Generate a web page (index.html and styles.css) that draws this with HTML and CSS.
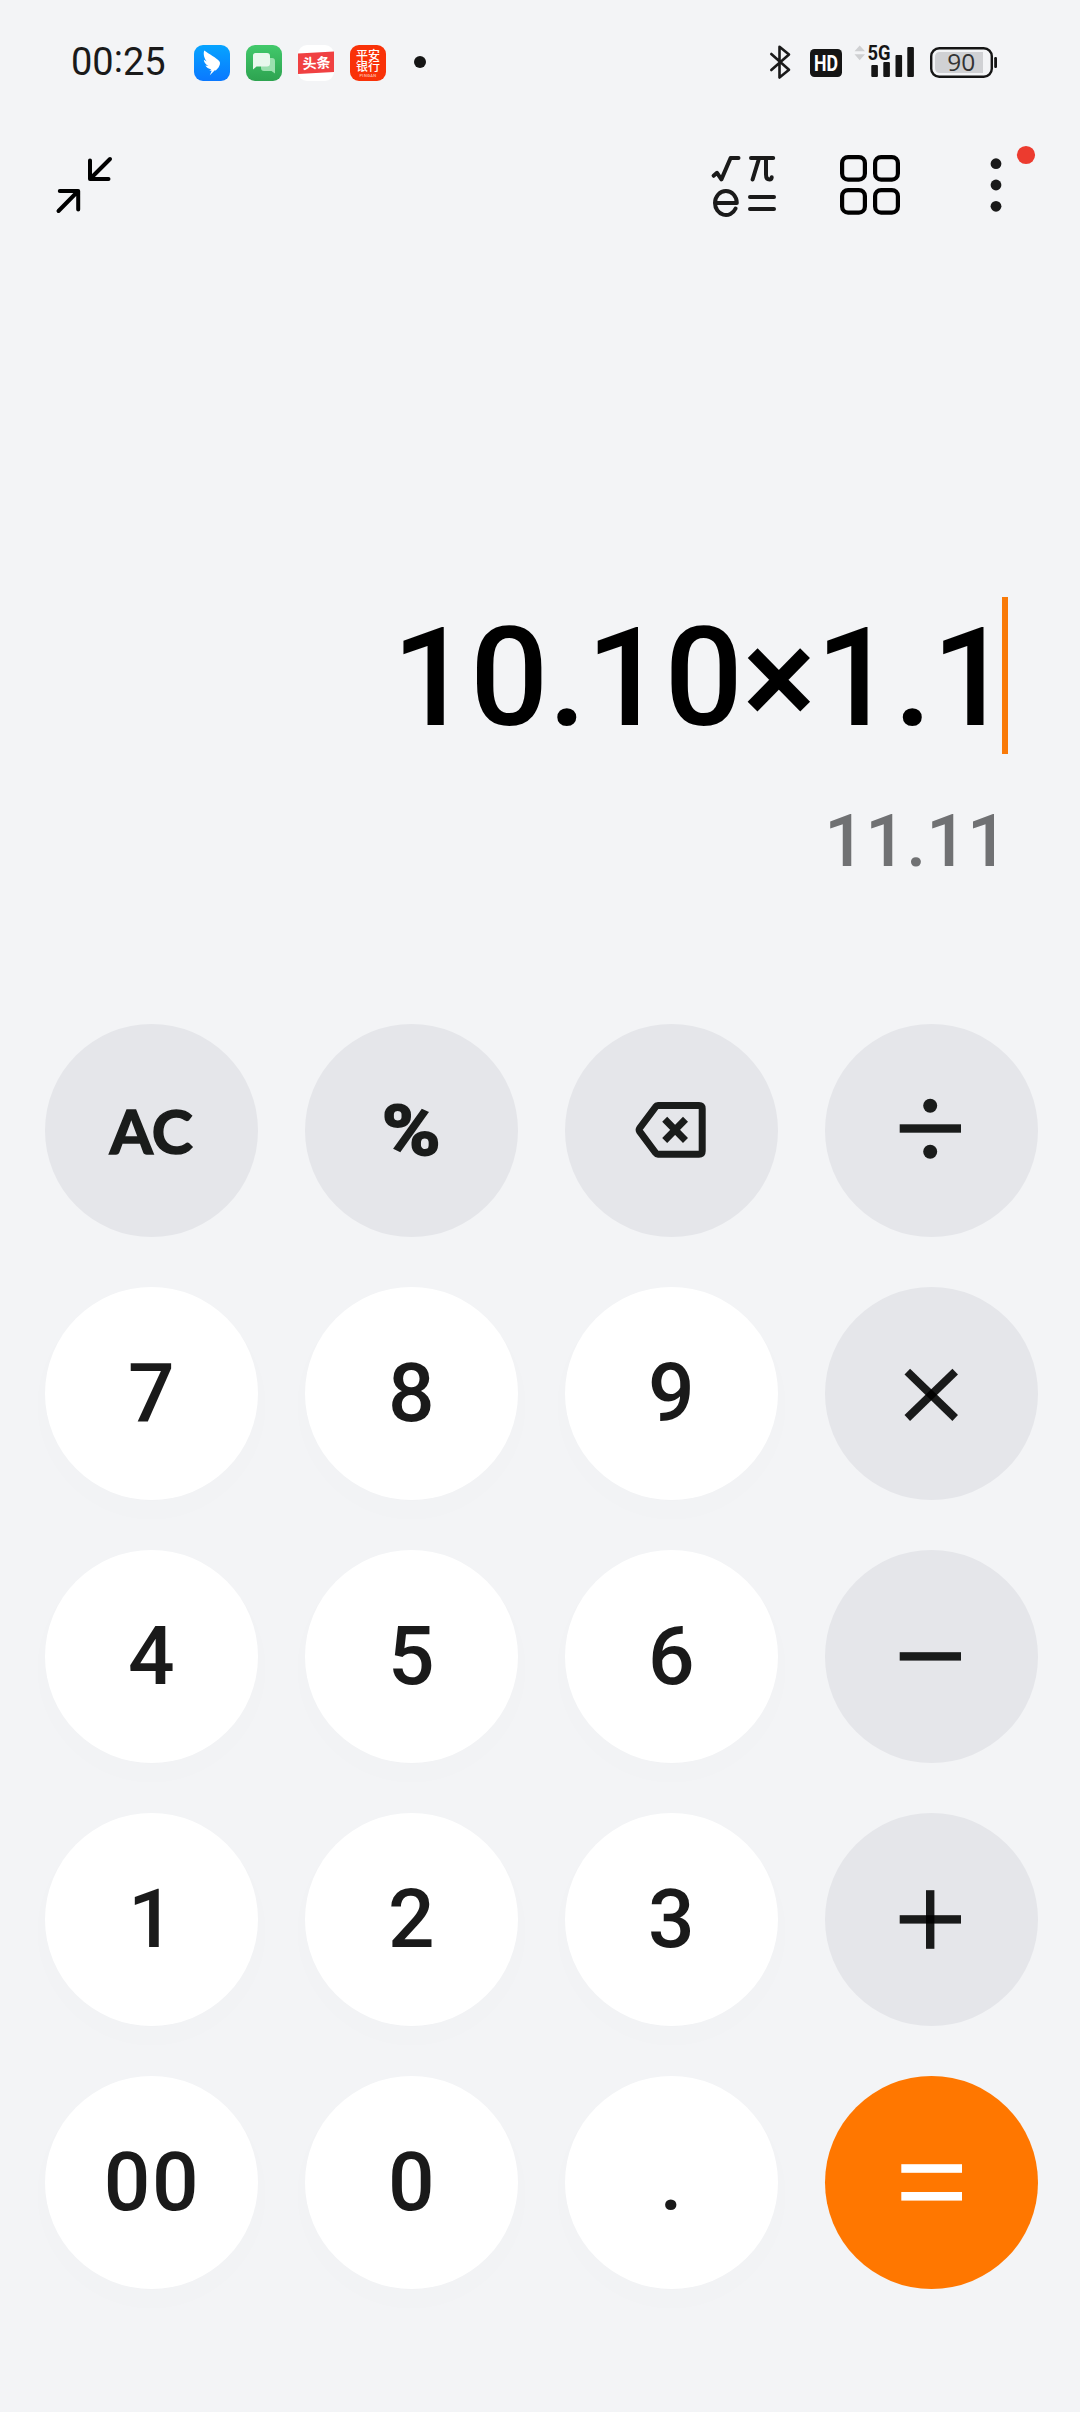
FILE: index.html
```html
<!DOCTYPE html>
<html lang="zh-CN">
<head>
<meta charset="utf-8">
<title>计算器</title>
<link rel="stylesheet" href="styles.css">
</head>
<body>
<div class="screen">
  <div class="status">
    <div class="clock">00<span class="colon">:</span>25</div>
    <div class="apps">
      <svg class="app" viewBox="0 0 36 36">
        <defs><linearGradient id="blue" x1="0" y1="0" x2="0" y2="1"><stop offset="0" stop-color="#06a4ff"/><stop offset="1" stop-color="#0a78ff"/></linearGradient></defs>
        <rect width="36" height="36" rx="9" fill="url(#blue)"/>
        <path d="M10.2 5.4C15 9 22.500 12.500 25.500 16.500C26.600 18.200 25.800 20 24.500 22.500L21.800 25.600L20.800 25.300L15.800 30.200L17.700 25.800L15.400 25.500L17.300 24.300C14.500 23.800 12.300 22.500 11.400 20.600L14.400 21C11.500 19.500 10.100 17.600 9.800 14.800L12.800 16.500C10.400 13.500 9 9.500 10.200 5.400Z" fill="#fff"/>
      </svg>
      <svg class="app" viewBox="0 0 36 36">
        <defs><linearGradient id="green" x1="0" y1="0" x2="0" y2="1"><stop offset="0" stop-color="#42c96b"/><stop offset="1" stop-color="#2da350"/></linearGradient></defs>
        <rect width="36" height="36" rx="9" fill="url(#green)"/>
        <path d="M15 13h11q3 0 3 3v12.500l-3.500-2.500H18q-3 0-3-3z" fill="#9be0af"/>
        <path d="M9.500 8H21q3 0 3 3v7.500q0 3-3 3H10.500L7 24.500V10.500q0-2.500 2.500-2.500z" fill="#e9f8ed"/>
      </svg>
      <svg class="app" viewBox="0 0 36 36">
        <rect width="36" height="36" rx="9" fill="#fff"/>
        <path d="M0 8.500L36 6.500V27L0 29Z" fill="#f04142"/>
        <text x="18.500" y="23.300" transform="rotate(-3 18 18)" text-anchor="middle" class="cjk" font-size="14">头条</text>
      </svg>
      <svg class="app" viewBox="0 0 36 36">
        <rect width="36" height="36" rx="9" fill="#f93208"/>
        <text text-anchor="middle" class="cjk bank"><tspan x="18" y="14.600">平安</tspan><tspan x="18" y="26.300">银行</tspan><tspan x="18" y="32.200" class="tiny">PINGAN</tspan></text>
      </svg>
    </div>
    <span class="more-dot"></span>
    <svg class="system" viewBox="768 42 232 40">
      <path d="M771.300 54L789 69.800L779.500 77.500V46.800L789 54.500L771.300 70" fill="none" stroke="#1a1a1a" stroke-width="2.600" stroke-linejoin="round" stroke-linecap="round"/>
      <rect x="810" y="49" width="32" height="28" rx="4.500" fill="#151515"/>
      <text x="826" y="70.700" text-anchor="middle" class="hd" textLength="24" lengthAdjust="spacingAndGlyphs">HD</text>
      <path d="M854.500 51.300L859.700 45.500L865 51.300ZM854.500 54.300H865L859.700 60.300Z" fill="#cfd0d2"/>
      <text x="867.500" y="60" class="fiveg" textLength="23" lengthAdjust="spacingAndGlyphs">5G</text>
      <g fill="#151515"><rect x="871.300" y="65" width="6.600" height="12" rx="1"/><rect x="883.300" y="62" width="6.600" height="15" rx="1"/><rect x="895.500" y="55" width="6.600" height="22" rx="1"/><rect x="907.300" y="47" width="6.600" height="30" rx="1"/></g>
      <rect x="931.200" y="48.200" width="60.600" height="28.600" rx="8" fill="none" stroke="#151515" stroke-width="2.400"/>
      <path d="M940 52H983V73H940Q935 73 935 68V57Q935 52 940 52Z" fill="#d0d1d4"/>
      <rect x="994.200" y="57" width="2.800" height="11" rx="1.200" fill="#151515"/>
      <text x="961.300" y="71.300" text-anchor="middle" class="level">90</text>
    </svg>
  </div>

  <div class="toolbar">
    <svg class="shrink" viewBox="54 154 62 62" fill="none" stroke="#000" stroke-width="4" stroke-linecap="round" stroke-linejoin="round">
      <path d="M90 160.500V179H108.500M90.500 178.500L110 159M59.800 191H78.200V209.500M77.700 191.500L58.500 211"/>
    </svg>
    <svg class="tools" viewBox="706 140 336 80">
      <g fill="none" stroke="#1a1a1a" stroke-width="4" stroke-linecap="round" stroke-linejoin="round">
        <path d="M713.600 175.800L717 172.800L721.400 179.400L730.600 158H738.500"/>
        <path d="M751 158H773.200M759 158.500L752.600 179.500M766 158.500V174.500Q766 179.500 769.500 179.500Q771.500 179.500 771.700 177.300"/>
        <path d="M715 203H736.800A10.900 12 0 0 0 715 203A10.900 12 0 0 0 735.600 208.500"/>
        <path d="M750 197H774M750 209H774"/>
      </g>
      <g fill="none" stroke="#000" stroke-width="4.200">
        <rect x="842.100" y="157.100" width="22.800" height="22.500" rx="6"/><rect x="875.100" y="157.100" width="22.800" height="22.500" rx="6"/>
        <rect x="842.100" y="190.100" width="22.800" height="22.500" rx="6"/><rect x="875.100" y="190.100" width="22.800" height="22.500" rx="6"/>
      </g>
      <g fill="#1a1a1a"><circle cx="996" cy="163.700" r="5.400"/><circle cx="996" cy="185" r="5.400"/><circle cx="996" cy="206.300" r="5.400"/></g>
      <circle cx="1026" cy="155" r="9.100" fill="#ec3b2f"/>
    </svg>
  </div>

  <div class="display">
    <div class="expression"><span class="formula">10.10×1.1</span><span class="cursor"></span></div>
    <div class="result">11.11</div>
  </div>

  <div class="keys">
    <div class="key fn ac">AC</div>
    <div class="key fn percent"><span class="wide">%</span></div>
    <div class="key fn"><svg viewBox="0 0 213 213" fill="none" stroke="#1a1c1b"><path d="M93 81.500H134Q137.200 81.500 137.200 84.700V127Q137.200 130.200 134 130.200H93Q91.500 130.200 90.500 128.800L74.800 107.700Q73.500 105.800 74.800 104L90.500 83Q91.500 81.500 93 81.500Z" stroke-width="7"/><path d="M99.700 95.300L120.500 116.500M120.500 95.300L99.700 116.500" stroke-width="7"/></svg></div>
    <div class="key fn"><svg viewBox="0 0 213 213" fill="#1a1c1b"><rect x="74.700" y="100.300" width="61.300" height="8.400"/><circle cx="105.200" cy="81.700" r="7"/><circle cx="105.200" cy="127.700" r="7"/></svg></div>

    <div class="key num">7</div>
    <div class="key num">8</div>
    <div class="key num">9</div>
    <div class="key fn"><svg viewBox="0 0 213 213" stroke="rgba(0,0,0,.89)" stroke-width="8"><line x1="82.300" y1="84.700" x2="130.200" y2="131"/><line x1="130.200" y1="84.700" x2="82.300" y2="131"/></svg></div>

    <div class="key num">4</div>
    <div class="key num">5</div>
    <div class="key num">6</div>
    <div class="key fn"><svg viewBox="0 0 213 213" fill="#1a1c1b"><rect x="74.700" y="102.200" width="61.300" height="8.400"/></svg></div>

    <div class="key num">1</div>
    <div class="key num">2</div>
    <div class="key num">3</div>
    <div class="key fn"><svg viewBox="0 0 213 213" fill="rgba(0,0,0,.89)"><rect x="74.700" y="102.200" width="61.300" height="8.400"/><rect x="101" y="77.200" width="8.400" height="58.600"/></svg></div>

    <div class="key num">00</div>
    <div class="key num">0</div>
    <div class="key num">.</div>
    <div class="key equals"><svg viewBox="0 0 213 213" fill="#fff"><rect x="76.300" y="88.200" width="60.700" height="8.600"/><rect x="76.300" y="116" width="60.700" height="8.600"/></svg></div>
  </div>
</div>
</body>
</html>
```
FILE: styles.css
```css
* { box-sizing: border-box; }
body {
  margin: 0;
  background: #f3f4f6;
  font-family: Roboto, "Noto Sans CJK SC", sans-serif;
  color: #1a1a1a;
}
svg { display: block; }
.screen {
  width: 1080px;
  height: 2412px;
  overflow: hidden;
  display: flex;
  flex-direction: column;
}
.status {
  height: 124px;
  padding: 0 80px 0 70px;
  display: flex;
  align-items: center;
}
.clock {
  width: 124px;
  padding-left: 1px;
  font-size: 38px;
  line-height: 44px;
}
.colon { position: relative; top: -3px; }
.apps { display: flex; gap: 16px; margin-top: 2px; }
.app { width: 36px; height: 36px; }
.cjk { font-family: "Noto Sans CJK SC", sans-serif; font-weight: 700; fill: #fff; }
.bank { font-size: 12px; font-weight: 500; }
.tiny { font-family: Roboto, sans-serif; font-size: 4px; letter-spacing: 0.4px; fill: #ffc9b8; }
.more-dot {
  width: 12px;
  height: 12px;
  margin-left: 28px;
  border-radius: 50%;
  background: #151515;
}
.system { width: 232px; height: 40px; margin-left: auto; }
.hd { font-family: Roboto, sans-serif; font-size: 22px; font-weight: 700; fill: #fff; }
.fiveg { font-family: Roboto, sans-serif; font-size: 21px; font-weight: 700; fill: #151515; }
.level { font-family: "Open Sans", sans-serif; font-size: 24.5px; fill: #333; }

.toolbar {
  height: 122px;
  padding: 16px 38px 0 54px;
  display: flex;
  justify-content: space-between;
}
.shrink { width: 62px; height: 62px; margin-top: 14px; }
.tools { width: 336px; height: 80px; }

.display {
  height: 778px;
  padding: 351px 72px 0 0;
  display: flex;
  flex-direction: column;
  align-items: flex-end;
  font-weight: 500;
}
.expression {
  height: 157px;
  display: flex;
  align-items: center;
  font-size: 138px;
  line-height: 157px;
  color: #000;
}
.formula { margin-right: -8px; padding-top: 6px; letter-spacing: -0.3px; }
.cursor { width: 6px; height: 157px; background: #f97a08; }
.result {
  margin: 46px 0 0 0;
  font-size: 72px;
  line-height: 84px;
  color: #707173;
}

.keys {
  display: grid;
  grid-template-columns: repeat(4, 213px);
  grid-auto-rows: 213px;
  gap: 50px 47px;
  padding-left: 45px;
}
.key {
  border-radius: 50%;
  display: flex;
  align-items: center;
  justify-content: center;
}
.key svg { width: 213px; height: 213px; }
.num {
  background: #fff;
  padding: 0 0 2px 1px;
  font-size: 82px;
  font-weight: 500;
  letter-spacing: 1.6px;
  box-shadow: 0 12px 44px rgba(0, 0, 0, 0.01);
}
.fn { background: #e5e6ea; color: #1a1c1b; }
.ac {
  padding-bottom: 2px;
  font-family: Lato, sans-serif;
  font-size: 62px;
  font-weight: 700;
  letter-spacing: 0.5px;
  -webkit-text-stroke: 1.6px #1a1c1b;
}
.percent { font-size: 71px; font-weight: 700; -webkit-text-stroke: 1.8px #1a1c1b; }
.wide { transform: scaleX(1.12); }
.equals { background: #ff7700; }
```
